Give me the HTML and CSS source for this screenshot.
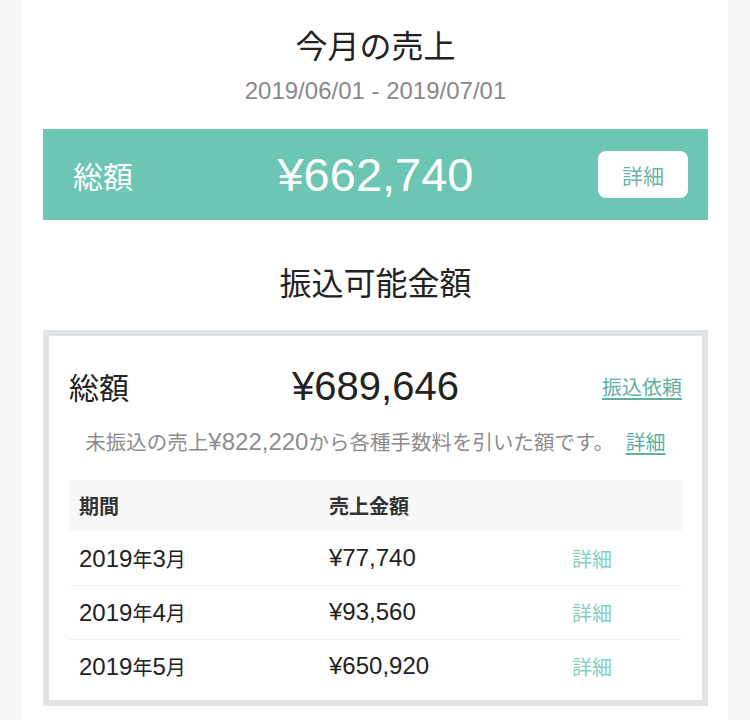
FILE: index.html
```html
<!DOCTYPE html>
<html lang="ja">
<head>
<meta charset="utf-8">
<title>今月の売上</title>
<link rel="stylesheet" href="styles.css">
</head>
<body>
<div class="panel">
  <h1 class="title">今月の売上</h1>
  <p class="period">2019/06/01 - 2019/07/01</p>
  <div class="banner">
    <span class="banner-label">総額</span>
    <span class="banner-amount">¥662,740</span>
    <span class="banner-action"><a class="btn" href="#">詳細</a></span>
  </div>
  <h2 class="title section-title">振込可能金額</h2>
  <div class="card">
    <div class="total-row">
      <span class="total-label">総額</span>
      <span class="total-amount">¥689,646</span>
      <span class="total-action"><a class="link" href="#">振込依頼</a></span>
    </div>
    <p class="note">未振込の売上<span class="num">¥822,220</span>から各種手数料を引いた額です。 <a class="link" href="#">詳細</a></p>
    <table class="table">
      <thead>
        <tr><th class="c1">期間</th><th class="c2">売上金額</th><th class="c3"></th></tr>
      </thead>
      <tbody>
        <tr><td><span class="num">2019</span>年<span class="num">3</span>月</td><td><span class="num">¥77,740</span></td><td><a class="row-link" href="#">詳細</a></td></tr>
        <tr><td><span class="num">2019</span>年<span class="num">4</span>月</td><td><span class="num">¥93,560</span></td><td><a class="row-link" href="#">詳細</a></td></tr>
        <tr><td><span class="num">2019</span>年<span class="num">5</span>月</td><td><span class="num">¥650,920</span></td><td><a class="row-link" href="#">詳細</a></td></tr>
      </tbody>
    </table>
  </div>
</div>
</body>
</html>
```
FILE: styles.css
```css
html, body {
  margin: 0;
  padding: 0;
  background: #f5f6f8;
  font-family: "Liberation Sans", "Noto Sans CJK JP", sans-serif;
  color: #222;
}
.panel {
  margin-left: 22px;
  width: 706px;
  min-height: 720px;
  box-sizing: border-box;
  background: #fff;
  padding: 27px 20px 0 21px;
}
.title {
  margin: 0;
  font-size: 32px;
  line-height: 40px;
  font-weight: normal;
  text-align: center;
  color: #222;
}
.period {
  margin: 10px 0 0;
  font-size: 24px;
  line-height: 28px;
  text-align: center;
  color: #8a8a8a;
}
.banner {
  margin-top: 24px;
  height: 91px;
  background: #6cc6b3;
  color: #fff;
  display: grid;
  grid-template-columns: 1fr auto 1fr;
  align-items: center;
  padding: 0 20px;
}
.banner-label {
  font-size: 30px;
  margin-left: 10px;
}
.banner-amount {
  font-size: 47px;
  line-height: 1;
}
.banner-action {
  display: flex;
  justify-content: flex-end;
}
.btn {
  display: flex;
  align-items: center;
  justify-content: center;
  width: 90px;
  height: 47px;
  background: #fff;
  border-radius: 8px;
  color: #6cb5a6;
  font-size: 21px;
  text-decoration: none;
}
.section-title {
  margin-top: 44px;
}
.card {
  margin-top: 26px;
  border: 6px solid #e1e4e7;
  padding: 20px 20px 7px;
}
.total-row {
  height: 60px;
  display: grid;
  grid-template-columns: 1fr auto 1fr;
  align-items: center;
}
.total-label {
  font-size: 30px;
}
.total-amount {
  font-size: 40px;
  line-height: 1;
}
.total-action {
  display: flex;
  justify-content: flex-end;
}
.link {
  color: #5fb09f;
  font-size: 20px;
  text-decoration: underline;
  text-underline-offset: 3px;
}
.num {
  font-size: 24px;
  line-height: 1;
}
.note {
  margin: 13px 0 0;
  font-size: 20.5px;
  line-height: 28px;
  height: 28px;
  text-align: center;
  color: #8c8c8c;
}
.note .link {
  margin-left: 6px;
}
.table {
  margin-top: 23px;
  width: 100%;
  border-collapse: collapse;
  table-layout: fixed;
  font-size: 20px;
}
.table th {
  height: 51px;
  background: #f8f8f8;
  text-align: left;
  font-weight: bold;
  padding: 0 10px;
  color: #333;
}
.table .c1 { width: 250px; box-sizing: border-box; }
.table .c2 { width: 243px; box-sizing: border-box; }
.table td {
  height: 53px;
  padding: 0 10px;
  border-top: 1px solid #f1f1f1;
  color: #222;
}
.table tbody tr:first-child td {
  border-top: none;
  height: 54px;
}
.row-link {
  color: #84cfbf;
  text-decoration: none;
}
```
